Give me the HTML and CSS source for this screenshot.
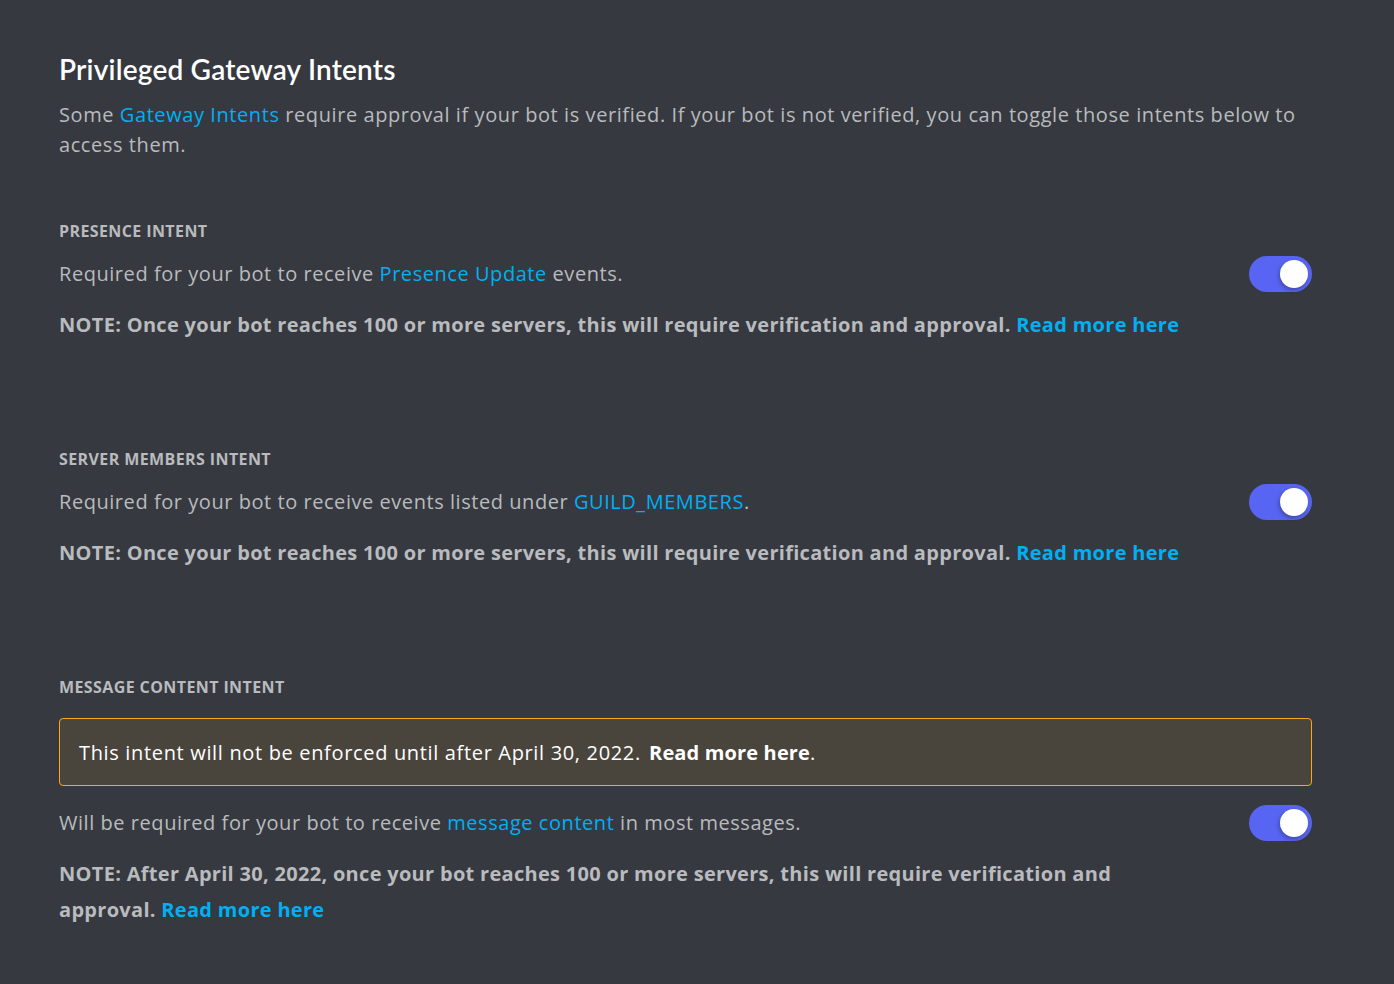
FILE: index.html
```html
<!DOCTYPE html>
<html lang="en">
<head>
<meta charset="utf-8">
<title>Privileged Gateway Intents</title>
<link rel="stylesheet" href="styles.css">
</head>
<body>
<main class="page">
  <h2 class="title">Privileged Gateway Intents</h2>
  <p class="intro">Some <a class="link" href="#">Gateway Intents</a> require approval if your bot is verified. If your bot is not verified, you can toggle those intents below to access them.</p>

  <section class="intent">
    <h3 class="label">Presence Intent</h3>
    <div class="row">
      <p class="desc">Required for your bot to receive <a class="link" href="#">Presence Update</a> events.</p>
      <span class="toggle"><span class="knob"></span></span>
    </div>
    <p class="note">NOTE: Once your bot reaches 100 or more servers, this will require verification and approval. <a class="link" href="#">Read more here</a></p>
  </section>

  <section class="intent">
    <h3 class="label">Server Members Intent</h3>
    <div class="row">
      <p class="desc">Required for your bot to receive events listed under <a class="link" href="#">GUILD_MEMBERS</a>.</p>
      <span class="toggle"><span class="knob"></span></span>
    </div>
    <p class="note">NOTE: Once your bot reaches 100 or more servers, this will require verification and approval. <a class="link" href="#">Read more here</a></p>
  </section>

  <section class="intent">
    <h3 class="label">Message Content Intent</h3>
    <div class="warning"><span class="warning-text">This intent will not be enforced until after April 30, 2022.</span>&nbsp;<a class="warning-link" href="#">Read more here</a>.</div>
    <div class="row">
      <p class="desc">Will be required for your bot to receive <a class="link" href="#">message content</a> in most messages.</p>
      <span class="toggle"><span class="knob"></span></span>
    </div>
    <p class="note">NOTE: After April 30, 2022, once your bot reaches 100 or more servers, this will require verification and approval. <a class="link" href="#">Read more here</a></p>
  </section>
</main>
</body>
</html>
```

FILE: styles.css
```css
html, body {
  margin: 0;
  padding: 0;
  background: #36393f;
}

body {
  font-family: "Open Sans", Lato, sans-serif;
  color: #b9bbbe;
}

.page {
  padding: 52px 82px 40px 59px;
}

.title {
  margin: 0;
  font-family: Lato, "Open Sans", sans-serif;
  font-size: 28px;
  line-height: 34px;
  font-weight: 600;
  letter-spacing: 0.2px;
  color: #ffffff;
}

.intro {
  margin: 14px 0 0;
  font-size: 20px;
  line-height: 30px;
  font-weight: 400;
  letter-spacing: 0.58px;
}

.link {
  color: #00aff4;
  text-decoration: none;
}

.intent {
  margin-top: 61px;
}

.intent + .intent {
  margin-top: 106px;
}

.label {
  margin: 0;
  font-size: 16px;
  line-height: 20px;
  font-weight: 700;
  letter-spacing: 0.4px;
  text-transform: uppercase;
  color: #b9bbbe;
}

.row {
  display: flex;
  align-items: center;
  justify-content: space-between;
  margin-top: 15px;
}

.desc {
  margin: 0;
  font-size: 20px;
  line-height: 30px;
  letter-spacing: 0.55px;
}

.toggle {
  flex: none;
  width: 63px;
  height: 36px;
  border-radius: 18px;
  background: #5865f2;
  display: flex;
  align-items: center;
  justify-content: flex-end;
  padding-right: 4px;
  box-sizing: border-box;
}

.knob {
  width: 28px;
  height: 28px;
  border-radius: 50%;
  background: #ffffff;
  box-shadow: -1px 2px 4px rgba(0, 0, 0, 0.3);
}

.note {
  margin: 15px 0 0;
  max-width: 1141px;
  font-size: 20px;
  line-height: 36px;
  font-weight: 700;
  letter-spacing: 0.3px;
}

.note .link {
  font-weight: 700;
}

.warning {
  margin-top: 21px;
  padding: 0 19px;
  height: 68px;
  box-sizing: border-box;
  display: flex;
  align-items: center;
  background: #49443c;
  border: 1px solid #faa61a;
  border-radius: 4px;
  font-size: 20px;
  color: #ffffff;
  white-space: pre;
}

.warning-text {
  letter-spacing: 0.66px;
  margin-right: 3px;
}

.warning-link {
  color: #ffffff;
  font-weight: 700;
  letter-spacing: 0.15px;
  text-decoration: none;
}

.intent .warning + .row {
  margin-top: 19px;
}
```
